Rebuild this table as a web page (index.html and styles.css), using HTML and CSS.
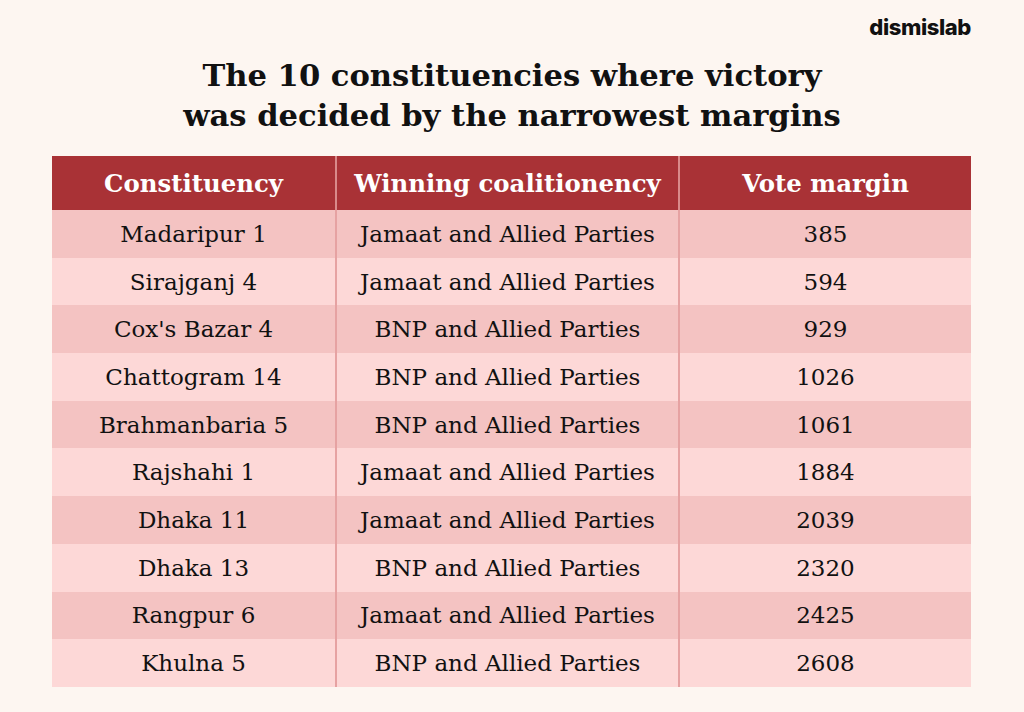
FILE: index.html
```html
<!DOCTYPE html>
<html>
<head>
<meta charset="utf-8">
<link rel="stylesheet" href="styles.css">
</head>
<body>
<div class="page">
  <div class="logo">dismislab</div>
  <h1 class="title">The 10 constituencies where victory<br>was decided by the narrowest margins</h1>
  <table class="tbl">
    <thead>
      <tr><th class="c1">Constituency</th><th class="c2">Winning coalitionency</th><th class="c3">Vote margin</th></tr>
    </thead>
    <tbody>
      <tr><td>Madaripur 1</td><td>Jamaat and Allied Parties</td><td>385</td></tr>
      <tr><td>Sirajganj 4</td><td>Jamaat and Allied Parties</td><td>594</td></tr>
      <tr><td>Cox's Bazar 4</td><td>BNP and Allied Parties</td><td>929</td></tr>
      <tr><td>Chattogram 14</td><td>BNP and Allied Parties</td><td>1026</td></tr>
      <tr><td>Brahmanbaria 5</td><td>BNP and Allied Parties</td><td>1061</td></tr>
      <tr><td>Rajshahi 1</td><td>Jamaat and Allied Parties</td><td>1884</td></tr>
      <tr><td>Dhaka 11</td><td>Jamaat and Allied Parties</td><td>2039</td></tr>
      <tr><td>Dhaka 13</td><td>BNP and Allied Parties</td><td>2320</td></tr>
      <tr><td>Rangpur 6</td><td>Jamaat and Allied Parties</td><td>2425</td></tr>
      <tr><td>Khulna 5</td><td>BNP and Allied Parties</td><td>2608</td></tr>
    </tbody>
  </table>
</div>
</body>
</html>
```
FILE: styles.css
```css
html, body {
  margin: 0;
  padding: 0;
  background: #fdf6f1;
}
.page {
  width: 1024px;
  height: 712px;
  position: relative;
  box-sizing: border-box;
  padding: 55px 52px 0 52px;
  font-family: "DejaVu Serif", "Liberation Serif", serif;
  color: #111;
}
.logo {
  position: absolute;
  right: 53px;
  top: 14px;
  font-family: "Inter", "Noto Sans", sans-serif;
  font-weight: 800;
  font-size: 22px;
  letter-spacing: -0.4px;
  color: #111;
}
.title {
  margin: 0 0 21px 0;
  text-align: center;
  font-size: 30.6px;
  line-height: 40px;
  font-weight: 700;
  color: #111;
}
.tbl {
  border-collapse: collapse;
  table-layout: fixed;
}
.tbl th {
  background: #a93236;
  color: #fff;
  font-size: 24.4px;
  font-weight: 700;
  height: 54px;
  padding: 0;
  text-align: center;
  border-left: 2px solid #d98a8a;
  white-space: nowrap;
}
.tbl th.c1 { width: 283px; border-left: none; }
.tbl th.c2 { width: 341px; }
.tbl th.c3 { width: 291px; }
.tbl td {
  font-size: 23px;
  height: 47.7px;
  padding: 0;
  text-align: center;
  border-left: 2px solid #e6a2a2;
  white-space: nowrap;
}
.tbl td:first-child { border-left: none; }
.tbl tbody tr:nth-child(odd) { background: #f4c3c2; }
.tbl tbody tr:nth-child(even) { background: #fdd8d7; }
```
